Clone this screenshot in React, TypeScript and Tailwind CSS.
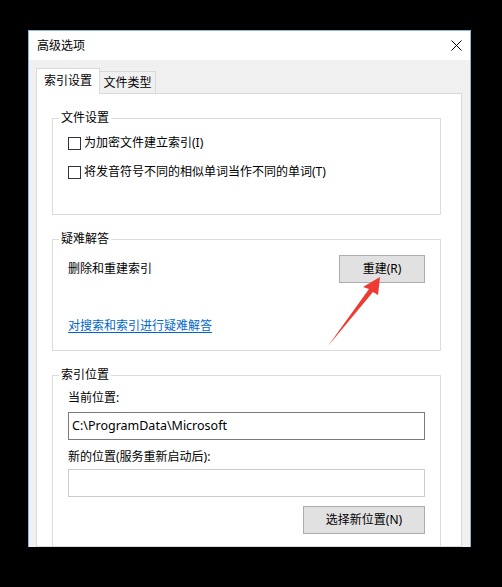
import React from "react";

function Checkbox({ label }: { label: string }) {
  return (
    <div className="flex h-[16px] items-center gap-[3px]">
      <span className="block h-[13px] w-[13px] border border-[#333333] bg-white" />
      <span>{label}</span>
    </div>
  );
}

function Group({ title, children, className = "" }: { title: string; children: React.ReactNode; className?: string }) {
  return (
    <fieldset className={`border border-[#dcdcdc] ${className}`}>
      <legend className="ml-[6px] px-[2px] leading-[16px]">{title}</legend>
      {children}
    </fieldset>
  );
}

export default function App() {
  return (
    <div className="relative h-[587px] w-[502px] overflow-hidden bg-black pl-[28px] pt-[30px] font-['Noto_Sans','Noto_Sans_CJK_SC',sans-serif] text-[12px] leading-[16px] text-black">
      <div className="flex h-[517px] w-[443px] flex-col overflow-hidden border border-b-0 border-[#8fb4e0] bg-[#f0f0f0]">
        {/* title bar */}
        <div className="flex h-[29px] shrink-0 items-center justify-between bg-white pl-[8px] pr-[8px]">
          <span>高级选项</span>
          <svg width="11" height="11" viewBox="0 0 11 11" className="block">
            <path d="M0.5 0.5 L10.5 10.5 M10.5 0.5 L0.5 10.5" stroke="#000" strokeWidth="1" fill="none" />
          </svg>
        </div>

        {/* body */}
        <div className="flex min-h-0 flex-1 flex-col pl-[7px] pr-[8px] pt-[8px]">
          <div className="relative z-10 -mb-px flex h-[26px] shrink-0 items-end">
            <div className="flex h-[26px] w-[64px] items-center justify-center border border-b-0 border-[#d9d9d9] bg-white pb-[2px]">
              索引设置
            </div>
            <div className="mb-px flex h-[22px] w-[56px] items-center justify-center border border-b-0 border-l-0 border-[#d9d9d9] bg-[#f0f0f0]">
              文件类型
            </div>
          </div>

          <div className="min-h-0 flex-1 border border-[#d9d9d9] bg-white pl-[15px] pr-[20px] pt-[16px]">
            <Group title="文件设置">
              <div className="flex flex-col gap-[13px] px-[15px] pb-[34px] pt-[9px]">
                <Checkbox label="为加密文件建立索引(I)" />
                <Checkbox label="将发音符号不同的相似单词当作不同的单词(T)" />
              </div>
            </Group>

            <Group title="疑难解答" className="mt-[16px]">
              <div className="px-[15px] pb-[16px] pt-[8px]">
                <div className="flex h-[28px] items-center justify-between">
                  <span className="pb-[1px]">删除和重建索引</span>
                  <button className="h-[28px] w-[86px] border border-[#adadad] bg-[#e1e1e1]">重建(R)</button>
                </div>
                <div className="mt-[35px] h-[16px]">
                  <span className="text-[#0066cc] underline underline-offset-2">对搜索和索引进行疑难解答</span>
                </div>
              </div>
            </Group>

            <Group title="索引位置" className="mt-[16px]">
              <div className="flex flex-col px-[15px] pb-[40px] pt-[7px]">
                <div className="h-[16px]">当前位置:</div>
                <div className="mt-[6px] flex h-[28px] items-center border border-[#7a7a7a] bg-white px-[3px] text-[12.5px]">
                  C:\ProgramData\Microsoft
                </div>
                <div className="mt-[9px] h-[16px]">新的位置(服务重新启动后):</div>
                <div className="mt-[4px] h-[28px] border border-[#cccccc] bg-white" />
                <div className="mt-[9px] flex justify-end">
                  <button className="h-[28px] w-[122px] border border-[#adadad] bg-[#e1e1e1]">选择新位置(N)</button>
                </div>
              </div>
            </Group>
          </div>
        </div>
      </div>

      {/* red annotation arrow */}
      <svg className="pointer-events-none absolute left-0 top-0" width="502" height="587" viewBox="0 0 502 587">
        <polygon points="380,277 363,287 369,289 328,346 373,292 378,295" fill="#ee3a32" />
      </svg>
    </div>
  );
}
